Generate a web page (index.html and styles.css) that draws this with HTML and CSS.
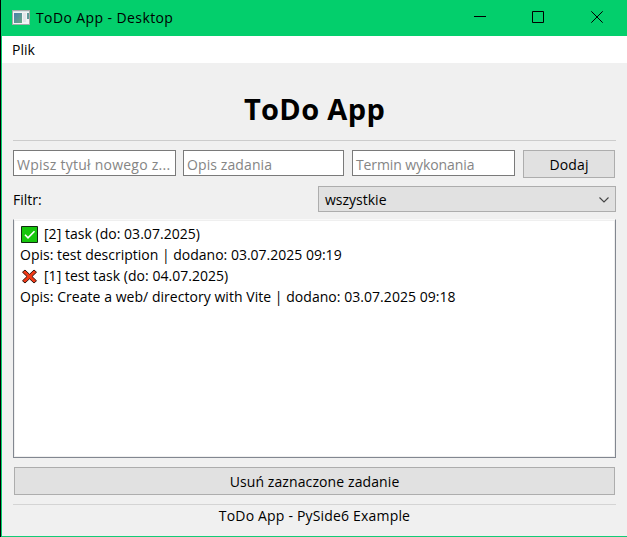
FILE: index.html
```html
<!DOCTYPE html>
<html lang="pl">
<head>
<meta charset="utf-8">
<title>ToDo App - Desktop</title>
<link rel="stylesheet" href="styles.css">
</head>
<body>
<div class="window">
  <header class="titlebar">
    <svg class="app-icon" width="18" height="15" viewBox="0 0 18 15">
      <defs><linearGradient id="pane" x1="0" y1="0" x2="1" y2="1"><stop offset="0" stop-color="#4a7fae"/><stop offset="1" stop-color="#68ab82"/></linearGradient></defs>
      <rect x=".5" y=".5" width="17" height="14" fill="#f2f4f5" stroke="#a4aaa9"/>
      <path d="M1 1.5h16" stroke="#d6e3e5"/>
      <rect x="2" y="3" width="8" height="10" fill="url(#pane)"/>
      <rect x="11" y="3" width="3" height="9" fill="#e2e5ea"/>
      <rect x="15" y="3" width="2" height="6" fill="#5e9b9a"/>
    </svg>
    <span class="title">ToDo App - Desktop</span>
    <div class="controls">
      <svg width="12" height="12" viewBox="0 0 12 12"><path d="M0 5.5h12" stroke="#000"/></svg>
      <svg width="12" height="12" viewBox="0 0 12 12"><path d="M.5.5h11v11H.5z" fill="none" stroke="#000"/></svg>
      <svg width="12" height="12" viewBox="0 0 12 12"><path d="M.3.3l11.4 11.4M11.7.3L.3 11.7" stroke="#000"/></svg>
    </div>
  </header>
  <nav class="menu"><span>Plik</span></nav>
  <main class="content">
    <h1><span>ToDo App</span></h1>
    <div class="line"></div>
    <div class="form">
      <div class="input first"><span class="new-title">Wpisz tytuł nowego z...</span></div>
      <div class="input second"><span class="description">Opis zadania</span></div>
      <div class="input third"><span class="due">Termin wykonania</span></div>
      <div class="button add"><span>Dodaj</span></div>
    </div>
    <div class="filter">
      <span class="filter-label">Filtr:</span>
      <div class="select"><span>wszystkie</span>
        <svg width="10" height="6" viewBox="0 0 10 6"><path d="M.5.5L5 5 9.5.5" fill="none" stroke="#444" stroke-width="1.1"/></svg>
      </div>
    </div>
    <div class="list">
      <div class="task">
        <div class="row head">
          <svg width="17" height="17" viewBox="0 0 17 17"><path d="M.5.5h16v16H.5z" fill="#16c60c" stroke="#102b10"/><path d="M4 8.8l3 3 6.5-6.5" fill="none" stroke="#fff" stroke-width="1.6"/></svg>
          <span>[2] task (do: 03.07.2025)</span>
        </div>
        <div class="row"><span>Opis: test description | dodano: 03.07.2025 09:19</span></div>
      </div>
      <div class="task">
        <div class="row head">
          <svg width="17" height="17" viewBox="0 0 17 17"><path d="M4 2l4.5 4.3L13 2l2.5 2.2L11 8.5l4.5 4.3L13 15l-4.5-4.2L4 15l-2.5-2.2L6 8.5 1.5 4.2z" fill="#f03a17" stroke="#35170f"/></svg>
          <span>[1] test task (do: 04.07.2025)</span>
        </div>
        <div class="row"><span class="long">Opis: Create a web/ directory with Vite | dodano: 03.07.2025 09:18</span></div>
      </div>
    </div>
    <div class="button delete"><span>Usuń zaznaczone zadanie</span></div>
    <div class="line bottom-line"></div>
    <footer><span>ToDo App - PySide6 Example</span></footer>
  </main>
</div>
</body>
</html>
```
FILE: styles.css
```css
* { box-sizing: border-box; }
body { margin: 0; background: #000; color: #000; font: 14px/20px "Open Sans", "Noto Sans", sans-serif; }
svg { display: block; flex: none; }
span { white-space: nowrap; }
.window { width: 626px; height: 537px; margin-left: 1px; border-left: 1px solid #03cf6c; border-bottom: 1px solid #12cb76; background: #f0f0f0; display: flex; flex-direction: column; overflow: hidden; }
.titlebar { height: 36px; flex: none; margin-left: -1px; padding: 0 24px 2px 11px; display: flex; align-items: center; background: #03cf6c; }
.title { margin-left: 6px; padding-top: 2px; letter-spacing: .4px; }
.controls { margin-left: auto; display: flex; gap: 47px; }
.controls svg:first-child { margin-right: -1px; transform: translateX(0); }
.menu { height: 27px; flex: none; padding: 4px 10px; background: #fff; }
.content { flex: 1; min-height: 0; padding: 0 11px; display: flex; flex-direction: column; }
h1 { margin: 26px 0 11px; height: 40px; text-align: center; font-size: 29px; line-height: 40px; font-weight: 700; letter-spacing: .35px; }
.line { height: 1px; background: #ccc; flex: none; }
.form { height: 28px; margin-top: 9px; display: flex; }
.input { height: 26px; padding: 4px 3px; line-height: 20px; border: 1px solid #7a7a7a; background: #fff; color: #858585; }
.new-title { letter-spacing: .25px; }
.description { letter-spacing: .1px; }
.due { letter-spacing: -.1px; }
.first { width: 163px; }
.second { width: 161px; margin-left: 7px; }
.third { width: 163px; margin-left: 8px; }
.button { height: 28px; border: 1px solid #adadad; background: #e1e1e1; text-align: center; line-height: 27px; flex: none; }
.add { width: 92px; margin-left: 8px; letter-spacing: .15px; }
.filter { height: 26px; margin-top: 8px; display: flex; align-items: center; justify-content: space-between; }
.filter-label { padding-top: 1px; }
.select { width: 298px; height: 26px; padding: 1px 6px 0 6px; border: 1px solid #adadad; background: #e1e1e1; display: flex; align-items: center; justify-content: space-between; }
.list { height: 239px; flex: none; margin-top: 7px; padding: 3px; border: 1px solid #828790; border-top-color: #f9f9f9; background: #fff; box-shadow: inset 0 0 0 1px #efefef; }
.row { height: 20px; line-height: 20px; padding-left: 3px; }
.row + .row { height: 20px; }
.head { height: 22px; display: flex; align-items: center; gap: 6px; padding-left: 4px; }
.head span { letter-spacing: .03px; }
.long { letter-spacing: .04px; }
.delete { margin: 9px 1px 0; letter-spacing: .1px; }
.bottom-line { margin-top: 9px; background: #d4d4d4; }
footer { height: 22px; text-align: center; line-height: 22px; letter-spacing: .18px; }
```
